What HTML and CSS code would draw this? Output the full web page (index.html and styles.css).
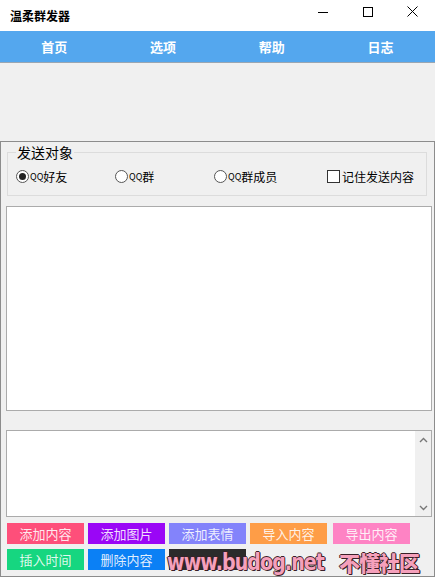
FILE: index.html
```html
<!DOCTYPE html>
<html lang="zh-CN">
<head>
  <meta charset="UTF-8">
  <title>温柔群发器</title>
  <link rel="stylesheet" href="styles.css">
</head>
<body>
  <div class="window">
    <div class="titlebar">
      <span class="title">温柔群发器</span>
      <div class="caption">
        <span class="cap-btn">
          <svg width="10" height="10" viewBox="0 0 10 10"><path d="M0 5.5H10" stroke="#000" stroke-width="1"/></svg>
        </span>
        <span class="cap-btn">
          <svg width="10" height="10" viewBox="0 0 10 10"><rect x="0.5" y="0.5" width="9" height="9" fill="none" stroke="#000" stroke-width="1"/></svg>
        </span>
        <span class="cap-btn">
          <svg width="11" height="11" viewBox="0 0 11 11"><path d="M0.5 0.5L10.5 10.5M10.5 0.5L0.5 10.5" stroke="#000" stroke-width="1"/></svg>
        </span>
      </div>
    </div>

    <nav class="menu">
      <a>首页</a>
      <a>选项</a>
      <a>帮助</a>
      <a>日志</a>
    </nav>

    <div class="banner"></div>

    <div class="panel">
      <fieldset class="group">
        <legend>发送对象</legend>
        <div class="options">
          <label class="opt"><span class="radio checked"></span><span class="qq">QQ</span>好友</label>
          <label class="opt"><span class="radio"></span><span class="qq">QQ</span>群</label>
          <label class="opt"><span class="radio"></span><span class="qq">QQ</span>群成员</label>
          <label class="opt check"><span class="box"></span>记住发送内容</label>
        </div>
      </fieldset>

      <div class="editor big"></div>

      <div class="editor small">
        <div class="scrollbar">
          <svg width="9" height="6" viewBox="0 0 9 6"><path d="M1 5L4.5 1.5L8 5" fill="none" stroke="#777" stroke-width="1.4"/></svg>
          <svg width="9" height="6" viewBox="0 0 9 6"><path d="M1 1L4.5 4.5L8 1" fill="none" stroke="#777" stroke-width="1.4"/></svg>
        </div>
      </div>

      <div class="buttons">
        <div class="row">
          <button class="btn red">添加内容</button>
          <button class="btn purple">添加图片</button>
          <button class="btn violet">添加表情</button>
          <button class="btn orange">导入内容</button>
          <button class="btn pink last">导出内容</button>
        </div>
        <div class="row">
          <button class="btn green">插入时间</button>
          <button class="btn blue">删除内容</button>
          <button class="btn dark"></button>
        </div>
      </div>

      <div class="watermark">
        <span class="wm-url">www.budog.net</span>
        <span class="wm-name">不懂社区</span>
      </div>
    </div>
  </div>
</body>
</html>
```

FILE: styles.css
```css
body {
  margin: 0;
  background-color: #fff;
  font-family: "Noto Sans CJK SC", "Noto Sans", sans-serif;
}
.window {
  width: 435px;
  height: 577px;
  background-color: #f0f0f0;
  overflow: hidden;
}
.titlebar {
  height: 31px;
  background-color: #fff;
  display: flex;
  justify-content: space-between;
}
.title {
  padding-left: 10px;
  line-height: 31px;
  font-size: 12px;
  font-weight: bold;
  color: #000;
}
.caption {
  display: flex;
}
.cap-btn {
  width: 45px;
  height: 23px;
  display: flex;
  align-items: center;
  justify-content: center;
}
.menu {
  height: 31px;
  background-color: #54a7ee;
  border-bottom: 1px solid #9aa6b2;
  display: flex;
}
.menu a {
  flex: 1;
  text-align: center;
  line-height: 31px;
  font-size: 13px;
  font-weight: bold;
  color: #fff;
}
.banner {
  height: 78px;
}
.panel {
  position: relative;
  height: 434px;
  border: 1px solid #8c8c8c;
  padding: 0 2px 0 5px;
}
.group {
  margin: 2px 5px 0 1px;
  padding: 0 8px 10px 8px;
  border: 1px solid #dcdcdc;
  height: 40px;
}
.group legend {
  padding: 0 1px;
  margin-left: 0;
  font-size: 14px;
  line-height: 16px;
  color: #000;
}
.options {
  display: grid;
  grid-template-columns: 99px 99px 113px auto;
  margin-top: 8px;
  height: 16px;
  align-items: center;
}
.opt {
  display: flex;
  align-items: center;
  font-size: 12px;
  color: #000;
  white-space: nowrap;
}
.qq {
  font-size: 9px;
  margin-left: 1px;
}
.radio {
  width: 11px;
  height: 11px;
  border: 1px solid #555;
  border-radius: 50%;
  background-color: #fff;
  display: flex;
  align-items: center;
  justify-content: center;
}
.radio.checked::after {
  content: "";
  width: 7px;
  height: 7px;
  border-radius: 50%;
  background-color: #222;
}
.box {
  width: 11px;
  height: 11px;
  border: 1px solid #333;
  background-color: #fff;
  margin-right: 2px;
}
.editor {
  background-color: #fff;
  border: 1px solid #ababab;
  box-sizing: border-box;
}
.editor.big {
  margin-top: 10px;
  height: 205px;
}
.editor.small {
  margin-top: 19px;
  height: 87px;
  display: flex;
  justify-content: flex-end;
}
.scrollbar {
  width: 16px;
  background-color: #f0f0f0;
  display: flex;
  flex-direction: column;
  justify-content: space-between;
  align-items: center;
  padding: 6px 0 5px;
}
.buttons {
  margin: 6px 0 0 1px;
  display: flex;
  flex-direction: column;
  gap: 5px;
}
.row {
  display: flex;
  gap: 4px;
}
.btn {
  width: 77px;
  height: 21px;
  padding: 0;
  border: none;
  font-family: "Noto Sans CJK SC", sans-serif;
  font-size: 13px;
  line-height: 21px;
  color: rgba(255, 255, 255, 0.88);
}
.btn.last {
  margin-left: 2px;
}
.red { background-color: #fe4f7a; }
.purple { background-color: #9a06f6; }
.violet { background-color: #8383fb; }
.orange { background-color: #fe9d47; }
.pink { background-color: #fe83c4; }
.green { background-color: #16d680; }
.blue { background-color: #0b80f5; }
.dark { background-color: #2b2b2b; }
.watermark {
  position: absolute;
  left: 166px;
  top: 405px;
  display: flex;
  align-items: center;
  gap: 12px;
  font-family: "DejaVu Sans Condensed", "DejaVu Sans", sans-serif;
  font-weight: bold;
  color: #f5a0bb;
  text-shadow: 1px 1px 0 #3a1f28, -1px 0 0 #3a1f28, 0 -1px 0 #3a1f28, 1px 0 0 #3a1f28;
}
.wm-url {
  font-size: 23px;
  letter-spacing: -1px;
  display: inline-block;
  width: 160px;
  transform: scaleX(0.92);
  transform-origin: left center;
}
.wm-name {
  font-family: "Noto Sans CJK SC", sans-serif;
  font-weight: 900;
  font-size: 21px;
  letter-spacing: -1px;
}
```
